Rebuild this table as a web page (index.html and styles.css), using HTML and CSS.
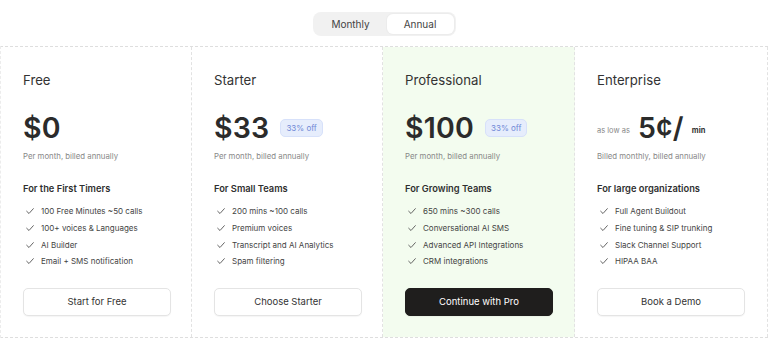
FILE: index.html
```html
<!DOCTYPE html>
<html>
<head>
<meta charset="utf-8">
<link rel="stylesheet" href="styles.css">
</head>
<body>
<div class="page">
  <div class="toggle-row">
    <div class="toggle">
      <span class="opt">Monthly</span>
      <span class="opt active">Annual</span>
    </div>
  </div>
  <div class="plans">
    <div class="plan">
      <div class="name">Free</div>
      <div class="price-row"><span class="price">$0</span></div>
      <div class="note">Per month, billed annually</div>
      <div class="audience">For the First Timers</div>
      <ul class="features">
        <li><svg class="check" viewBox="0 0 12 12"><path d="M2 6.3 L4.8 9 L10 3.2"/></svg>100 Free Minutes ~50 calls</li>
        <li><svg class="check" viewBox="0 0 12 12"><path d="M2 6.3 L4.8 9 L10 3.2"/></svg>100+ voices &amp; Languages</li>
        <li><svg class="check" viewBox="0 0 12 12"><path d="M2 6.3 L4.8 9 L10 3.2"/></svg>AI Builder</li>
        <li><svg class="check" viewBox="0 0 12 12"><path d="M2 6.3 L4.8 9 L10 3.2"/></svg>Email + SMS notification</li>
      </ul>
      <button class="btn">Start for Free</button>
    </div>
    <div class="plan">
      <div class="name">Starter</div>
      <div class="price-row"><span class="price">$33</span><span class="badge">33% off</span></div>
      <div class="note">Per month, billed annually</div>
      <div class="audience">For Small Teams</div>
      <ul class="features">
        <li><svg class="check" viewBox="0 0 12 12"><path d="M2 6.3 L4.8 9 L10 3.2"/></svg>200 mins ~100 calls</li>
        <li><svg class="check" viewBox="0 0 12 12"><path d="M2 6.3 L4.8 9 L10 3.2"/></svg>Premium voices</li>
        <li><svg class="check" viewBox="0 0 12 12"><path d="M2 6.3 L4.8 9 L10 3.2"/></svg>Transcript and AI Analytics</li>
        <li><svg class="check" viewBox="0 0 12 12"><path d="M2 6.3 L4.8 9 L10 3.2"/></svg>Spam filtering</li>
      </ul>
      <button class="btn">Choose Starter</button>
    </div>
    <div class="plan featured">
      <div class="name">Professional</div>
      <div class="price-row"><span class="price">$100</span><span class="badge">33% off</span></div>
      <div class="note">Per month, billed annually</div>
      <div class="audience">For Growing Teams</div>
      <ul class="features">
        <li><svg class="check" viewBox="0 0 12 12"><path d="M2 6.3 L4.8 9 L10 3.2"/></svg>650 mins ~300 calls</li>
        <li><svg class="check" viewBox="0 0 12 12"><path d="M2 6.3 L4.8 9 L10 3.2"/></svg>Conversational AI SMS</li>
        <li><svg class="check" viewBox="0 0 12 12"><path d="M2 6.3 L4.8 9 L10 3.2"/></svg>Advanced API Integrations</li>
        <li><svg class="check" viewBox="0 0 12 12"><path d="M2 6.3 L4.8 9 L10 3.2"/></svg>CRM integrations</li>
      </ul>
      <button class="btn dark">Continue with Pro</button>
    </div>
    <div class="plan">
      <div class="name">Enterprise</div>
      <div class="price-row"><span class="small">as low as</span><span class="price">5¢/</span><span class="unit">min</span></div>
      <div class="note">Billed monthly, billed annually</div>
      <div class="audience">For large organizations</div>
      <ul class="features">
        <li><svg class="check" viewBox="0 0 12 12"><path d="M2 6.3 L4.8 9 L10 3.2"/></svg>Full Agent Buildout</li>
        <li><svg class="check" viewBox="0 0 12 12"><path d="M2 6.3 L4.8 9 L10 3.2"/></svg>Fine tuning &amp; SIP trunking</li>
        <li><svg class="check" viewBox="0 0 12 12"><path d="M2 6.3 L4.8 9 L10 3.2"/></svg>Slack Channel Support</li>
        <li><svg class="check" viewBox="0 0 12 12"><path d="M2 6.3 L4.8 9 L10 3.2"/></svg>HIPAA BAA</li>
      </ul>
      <button class="btn">Book a Demo</button>
    </div>
  </div>
</div>
</body>
</html>
```
FILE: styles.css
```css
* { box-sizing: border-box; }
html, body { margin: 0; padding: 0; background: #fff; }
body { font-family: Inter, "Noto Sans", sans-serif; color: #2a2a2a; }
.page { width: 768px; height: 340px; overflow: hidden; }
.toggle-row { display: flex; justify-content: center; padding-top: 12px; height: 46px; }
.toggle { display: flex; background: #f1f1f1; border-radius: 8px; padding: 2px; height: 24px; }
.opt { display: flex; align-items: center; justify-content: center; font-size: 10px; color: #444; width: 72px; border-radius: 6px; }
.opt.active { background: #fff; width: 67px; box-shadow: 0 0 0 1px #ececec; }
.plans { display: grid; grid-template-columns: 191px 191px 192px 1fr; border-top: 1px dashed #dedede; border-bottom: 1px dashed #dedede; border-left: 1px dashed #ececec; height: 292px; }
.plan { padding: 24px 22px 0 22px; border-right: 1px dashed #e2e2e2; display: flex; flex-direction: column; }
.plan.featured { background: #f3fcef; }
.name { font-size: 13.2px; color: #333; line-height: 18px; height: 18px; }
.price-row { display: flex; align-items: center; margin-top: 21px; height: 36px; }
.price { font-size: 28.5px; font-weight: 600; color: #2b2b2b; letter-spacing: 0.2px; line-height: 36px; }
.badge { margin-left: 11px; background: #e6edfc; border: 1px solid #d7e1fa; color: #6f88d6; font-size: 8px; border-radius: 5px; padding: 3px 5px; line-height: 10px; }
.small { font-size: 7.5px; color: #888; margin-right: 8px; margin-top: 5px; }
.unit { font-size: 7.5px; font-weight: 700; color: #333; margin-left: 8px; margin-top: 5px; }
.note { font-size: 7.8px; color: #888; margin-top: 5px; line-height: 10px; }
.audience { font-size: 9.3px; font-weight: 600; color: #2f2f2f; margin-top: 21px; line-height: 13px; }
.features { list-style: none; margin: 8px 0 0 0; padding: 0; }
.features li { display: flex; align-items: center; font-size: 8px; color: #444; height: 16.7px; }
.check { width: 10px; height: 10px; margin-left: 2px; margin-right: 6px; fill: none; stroke: #555; stroke-width: 1.1; stroke-linecap: round; stroke-linejoin: round; }
.btn { margin-top: 18px; width: 148px; height: 28px; border: 1px solid #e4e4e4; border-radius: 5px; background: #fff; font-family: Inter, sans-serif; font-size: 9.5px; color: #333; box-shadow: 0 1px 1px rgba(0,0,0,0.04); cursor: pointer; }
.btn.dark { background: #1f1e1d; color: #fff; border-color: #1f1e1d; }
```
